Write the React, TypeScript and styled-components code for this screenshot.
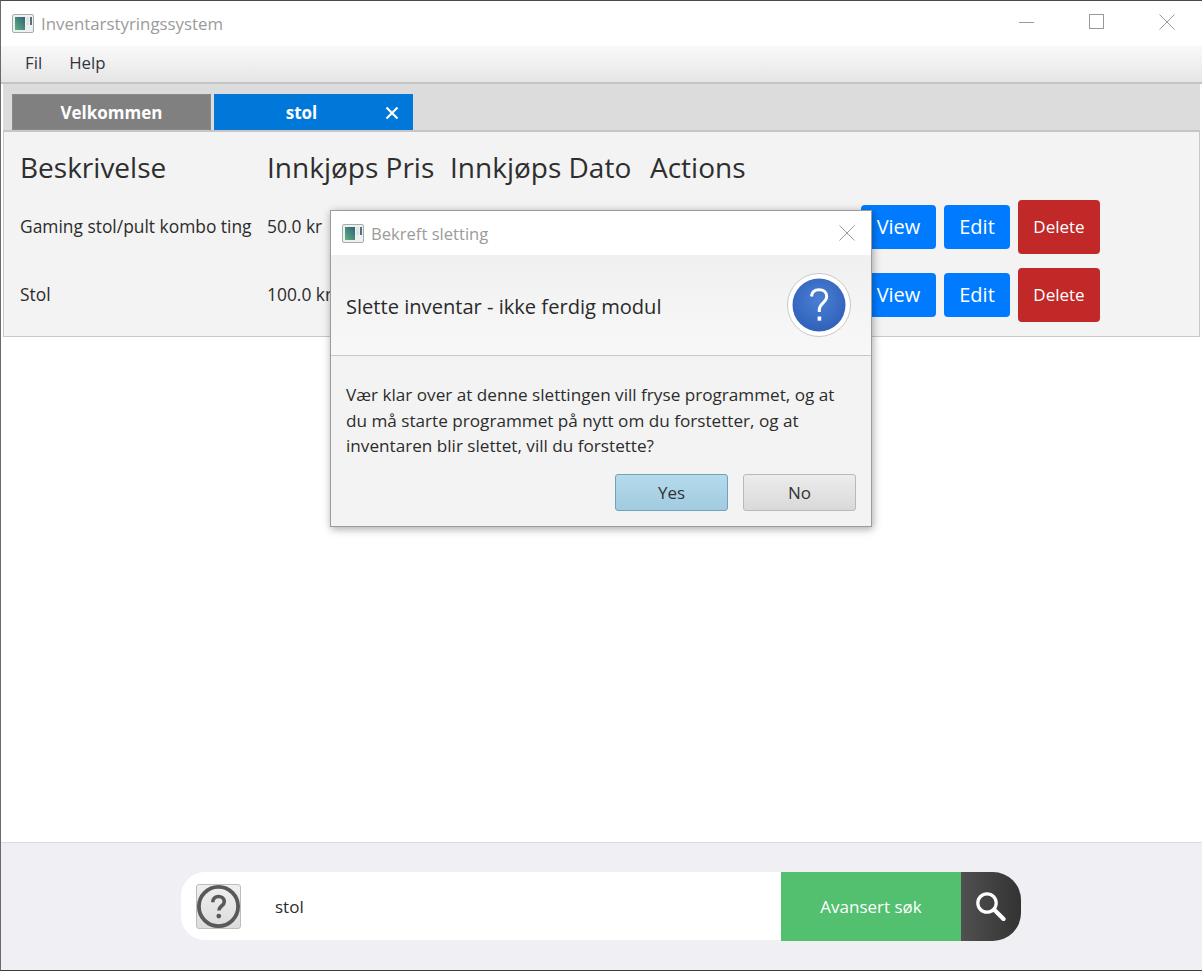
import styled, { createGlobalStyle } from 'styled-components';

const GlobalStyle = createGlobalStyle`
    html, body {
        margin: 0;
        padding: 0;
        background: #ffffff;
    }
    body {
        font-family: "Open Sans", "Noto Sans", "Liberation Sans", sans-serif;
        color: #2c2c2c;
    }
`;

const Window = styled.div`
    position: relative;
    display: flex;
    flex-direction: column;
    width: 1202px;
    height: 971px;
    box-sizing: border-box;
    border-top: 1px solid #4a4a4a;
    border-left: 1px solid #6a6a6a;
    border-bottom: 1px solid #3a3a3a;
    overflow: hidden;
    background: #ffffff;
`;

const TitleBar = styled.div`
    display: flex;
    align-items: center;
    height: 45px;
    padding: 0 0 0 11px;
    flex-shrink: 0;
    background: #ffffff;
`;

const TitleText = styled.span`
    margin-left: 7px;
    font-size: 16.85px;
    color: #9b9b9b;
    white-space: nowrap;
`;

const WindowControls = styled.div`
    display: flex;
    align-items: center;
    margin-left: auto;
    margin-bottom: 3px;
    padding-right: 27px;
    gap: 54px;
`;

const MenuBar = styled.div`
    display: flex;
    align-items: center;
    height: 38px;
    padding: 0 0 4px 24px;
    gap: 27px;
    flex-shrink: 0;
    box-sizing: border-box;
    border-bottom: 2px solid #c4c4c4;
    background: linear-gradient(to bottom, #f9f9f9, #e6e6e6);
`;

const MenuItem = styled.span`
    font-size: 16.8px;
    color: #33333f;
`;

const TabHeader = styled.div`
    display: flex;
    align-items: flex-end;
    height: 48px;
    margin: 0 2px 0 2px;
    padding: 0 0 0 9px;
    gap: 3px;
    flex-shrink: 0;
    box-sizing: border-box;
    border-bottom: 2px solid #c6c6c6;
    background: #dcdcdc;
`;

const Tab = styled.div<{ $active?: boolean }>`
    position: relative;
    display: flex;
    align-items: center;
    justify-content: center;
    width: 199px;
    height: 36px;
    padding-right: ${(p) => (p.$active ? 24 : 0)}px;
    box-sizing: border-box;
    border: 1px solid ${(p) => (p.$active ? '#0a78d8' : '#8a8a8a')};
    background: ${(p) => (p.$active ? '#0078d9' : '#808080')};
    color: #ffffff;
    font-size: 17px;
    font-weight: 700;
`;

const TabClose = styled.svg`
    position: absolute;
    right: 13px;
    top: 11px;
`;

const TablePane = styled.div`
    display: flex;
    flex-direction: column;
    height: 205px;
    margin: 0 2px;
    padding: 15px 0 0 16px;
    flex-shrink: 0;
    box-sizing: border-box;
    border: 1px solid #c8c8c8;
    border-top: none;
    background: #f3f3f3;
`;

const HeaderRow = styled.div`
    display: grid;
    grid-template-columns: 247px 183px 200px auto;
    height: 40px;
    align-items: center;
    font-size: 28px;
    color: #2e2e2e;
    white-space: nowrap;
`;

const DataRow = styled.div`
    display: grid;
    grid-template-columns: 247px 183px 411px auto;
    height: 68px;
    align-items: center;
    font-size: 17.4px;
    color: #2c2c2c;
    white-space: nowrap;
    span {
        margin-bottom: 2px;
    }
`;

const FirstDataRow = styled(DataRow)`
    margin-top: 6px;
`;

const Actions = styled.div`
    display: flex;
    align-items: center;
    gap: 8px;
    grid-column: 4;
`;

const ActionButton = styled.div<{ $width: number; $danger?: boolean }>`
    display: flex;
    align-items: center;
    justify-content: center;
    width: ${(p) => p.$width}px;
    height: ${(p) => (p.$danger ? 54 : 44)}px;
    padding-bottom: 2px;
    box-sizing: border-box;
    border-radius: 4px;
    background: ${(p) => (p.$danger ? '#c12828' : '#007bff')};
    color: #ffffff;
    font-size: ${(p) => (p.$danger ? 17 : 20)}px;
`;

const Spacer = styled.div`
    flex: 1;
    background: #ffffff;
`;

const BottomBar = styled.div`
    display: flex;
    justify-content: center;
    height: 128px;
    padding: 29px 1px 0 0;
    flex-shrink: 0;
    box-sizing: border-box;
    border-top: 1px solid #dcdcdc;
    background: #f0f0f4;
`;

const SearchBox = styled.div`
    display: flex;
    width: 840px;
    height: 69px;
`;

const SearchField = styled.div`
    display: flex;
    align-items: center;
    width: 600px;
    height: 68px;
    padding-left: 15px;
    box-sizing: border-box;
    border-radius: 24px 0 0 24px;
    background: #ffffff;
`;

const HelpButton = styled.div`
    display: flex;
    align-items: center;
    justify-content: center;
    width: 45px;
    height: 45px;
    box-sizing: border-box;
    border: 1px solid #bdbdbd;
    border-radius: 3px;
    background: linear-gradient(to bottom, #efefef, #dcdcdc);
`;

const SearchText = styled.span`
    margin-left: 34px;
    font-size: 17px;
    color: #2c2c2c;
`;

const AdvancedButton = styled.div`
    display: flex;
    align-items: center;
    justify-content: center;
    width: 180px;
    height: 69px;
    background: #52c06e;
    color: #ffffff;
    font-size: 17px;
`;

const SearchButton = styled.div`
    display: flex;
    align-items: center;
    justify-content: center;
    width: 60px;
    height: 69px;
    border-radius: 0 28px 28px 0;
    background: linear-gradient(to right, #505050, #333333);
`;

const Dialog = styled.div`
    position: absolute;
    left: 329px;
    top: 209px;
    display: flex;
    flex-direction: column;
    width: 542px;
    height: 317px;
    box-sizing: border-box;
    border: 1px solid #9c9c9c;
    background: #f3f3f3;
    box-shadow: 1px 2px 8px rgba(0, 0, 0, 0.35);
`;

const DialogTitle = styled.div`
    display: flex;
    align-items: center;
    height: 44px;
    padding: 0 16px 0 11px;
    flex-shrink: 0;
    background: #ffffff;
`;

const DialogTitleText = styled.span`
    margin-left: 7px;
    font-size: 16.6px;
    color: #9b9b9b;
`;

const DialogClose = styled.svg`
    margin-left: auto;
`;

const Masthead = styled.div`
    display: flex;
    align-items: center;
    justify-content: space-between;
    height: 101px;
    padding: 0 20px 0 15px;
    flex-shrink: 0;
    box-sizing: border-box;
    border-bottom: 1px solid #c8c8c8;
    background: linear-gradient(to bottom, #f0f0f0, #f8f8f8);
    font-size: 20.1px;
    color: #2a2a2a;
`;

const MastheadText = styled.span`
    margin-top: 2px;
`;

const QuestionBadge = styled.div`
    display: flex;
    align-items: center;
    justify-content: center;
    width: 64px;
    height: 64px;
    box-sizing: border-box;
    border: 1px solid #c9c9c9;
    border-radius: 50%;
    background: #ffffff;
`;

const DialogBody = styled.div`
    padding: 26px 15px 0;
    font-size: 17.15px;
    line-height: 25.5px;
    color: #2c2c2c;
    white-space: nowrap;
`;

const DialogButtons = styled.div`
    display: flex;
    justify-content: flex-end;
    gap: 15px;
    padding: 15px 15px 0 0;
`;

const DialogButton = styled.div<{ $primary?: boolean }>`
    display: flex;
    align-items: center;
    justify-content: center;
    width: 113px;
    height: 37px;
    box-sizing: border-box;
    border: 1px solid ${(p) => (p.$primary ? '#6fa3bd' : '#b9b9b9')};
    border-radius: 3px;
    background: ${(p) =>
        p.$primary
            ? 'linear-gradient(to bottom, #b4daec, #a2cbe0)'
            : 'linear-gradient(to bottom, #ececec, #d9d9d9)'};
    font-size: 17px;
    color: #333333;
`;

function AppIcon() {
    return (
        <svg width="22" height="19" viewBox="0 0 22 19">
            <defs>
                <linearGradient id="appIconFill" x1="0" y1="1" x2="1" y2="0">
                    <stop offset="0" stopColor="#5fb37e" />
                    <stop offset="1" stopColor="#2f5f7c" />
                </linearGradient>
            </defs>
            <rect x="0.5" y="0.5" width="21" height="18" rx="1.5" fill="#eef0f0" stroke="#a6acb0" />
            <rect x="3" y="3" width="10" height="13" fill="url(#appIconFill)" />
            <rect x="14" y="3" width="3" height="8" fill="#dfe3e3" />
            <rect x="18" y="3" width="2" height="8" fill="#58707c" />
        </svg>
    );
}

function HelpIcon() {
    return (
        <svg width="45" height="45" viewBox="0 0 45 45">
            <circle cx="22.5" cy="22.5" r="20.5" fill="none" stroke="#595959" strokeWidth="4" />
            <path
                d="M16.5 18c0-3.6 2.6-6 6-6s6 2.2 6 5.4c0 4.6-5.6 4.6-5.6 9.2"
                fill="none"
                stroke="#595959"
                strokeWidth="3.8"
            />
            <circle cx="22.8" cy="32.5" r="2.5" fill="#595959" />
        </svg>
    );
}

function QuestionDisc() {
    return (
        <svg width="54" height="54" viewBox="0 0 54 54">
            <defs>
                <radialGradient id="discFill" cx="0.5" cy="0.4" r="0.65">
                    <stop offset="0" stopColor="#4a7fd4" />
                    <stop offset="1" stopColor="#2f5fb8" />
                </radialGradient>
            </defs>
            <circle cx="27" cy="27" r="26.5" fill="url(#discFill)" />
            <path
                d="M19.5 18.5c.4-4.4 3.4-6.8 7.6-6.8s7.6 2.6 7.6 6.7c0 6.2-7.4 6.6-7.4 13.2v2.4"
                fill="none"
                stroke="#ffffff"
                strokeWidth="3"
            />
            <rect x="25.6" y="38.5" width="3.6" height="4.2" fill="#ffffff" />
        </svg>
    );
}

function SearchIcon() {
    return (
        <svg width="30" height="29" viewBox="0 0 30 29">
            <circle cx="11" cy="11" r="9.2" fill="none" stroke="#ffffff" strokeWidth="3.2" />
            <path d="M18.5 18l9 9" stroke="#ffffff" strokeWidth="4.2" strokeLinecap="round" />
        </svg>
    );
}

function App() {
    return (
        <>
            <GlobalStyle />
            <Window>
                <TitleBar>
                    <AppIcon />
                    <TitleText>Inventarstyringssystem</TitleText>
                    <WindowControls>
                        <svg width="16" height="16" viewBox="0 0 16 16">
                            <path d="M0 8.5h15" stroke="#999" />
                        </svg>
                        <svg width="16" height="16" viewBox="0 0 16 16">
                            <rect x="0.5" y="0.5" width="14" height="14" fill="none" stroke="#999" />
                        </svg>
                        <svg width="16" height="16" viewBox="0 0 16 16">
                            <path d="M0.5 0.5l15 15M15.5 0.5l-15 15" stroke="#999" />
                        </svg>
                    </WindowControls>
                </TitleBar>
                <MenuBar>
                    <MenuItem>Fil</MenuItem>
                    <MenuItem>Help</MenuItem>
                </MenuBar>
                <TabHeader>
                    <Tab>Velkommen</Tab>
                    <Tab $active>
                        stol
                        <TabClose width="14" height="14" viewBox="0 0 14 14">
                            <path d="M1.5 1.5l11 11M12.5 1.5l-11 11" stroke="#fff" strokeWidth="2.2" />
                        </TabClose>
                    </Tab>
                </TabHeader>
                <TablePane>
                    <HeaderRow>
                        <span>Beskrivelse</span>
                        <span>Innkjøps Pris</span>
                        <span>Innkjøps Dato</span>
                        <span>Actions</span>
                    </HeaderRow>
                    <FirstDataRow>
                        <span>Gaming stol/pult kombo ting</span>
                        <span>50.0 kr</span>
                        <Actions>
                            <ActionButton $width={75}>View</ActionButton>
                            <ActionButton $width={66}>Edit</ActionButton>
                            <ActionButton $width={82} $danger>Delete</ActionButton>
                        </Actions>
                    </FirstDataRow>
                    <DataRow>
                        <span>Stol</span>
                        <span>100.0 kr</span>
                        <Actions>
                            <ActionButton $width={75}>View</ActionButton>
                            <ActionButton $width={66}>Edit</ActionButton>
                            <ActionButton $width={82} $danger>Delete</ActionButton>
                        </Actions>
                    </DataRow>
                </TablePane>
                <Spacer />
                <BottomBar>
                    <SearchBox>
                        <SearchField>
                            <HelpButton>
                                <HelpIcon />
                            </HelpButton>
                            <SearchText>stol</SearchText>
                        </SearchField>
                        <AdvancedButton>Avansert søk</AdvancedButton>
                        <SearchButton>
                            <SearchIcon />
                        </SearchButton>
                    </SearchBox>
                </BottomBar>
                <Dialog>
                    <DialogTitle>
                        <AppIcon />
                        <DialogTitleText>Bekreft sletting</DialogTitleText>
                        <DialogClose width="16" height="16" viewBox="0 0 16 16">
                            <path d="M0.5 0.5l15 15M15.5 0.5l-15 15" stroke="#999" />
                        </DialogClose>
                    </DialogTitle>
                    <Masthead>
                        <MastheadText>Slette inventar - ikke ferdig modul</MastheadText>
                        <QuestionBadge>
                            <QuestionDisc />
                        </QuestionBadge>
                    </Masthead>
                    <DialogBody>
                        Vær klar over at denne slettingen vill fryse programmet, og at
                        <br />
                        du må starte programmet på nytt om du forstetter, og at
                        <br />
                        inventaren blir slettet, vill du forstette?
                    </DialogBody>
                    <DialogButtons>
                        <DialogButton $primary>Yes</DialogButton>
                        <DialogButton>No</DialogButton>
                    </DialogButtons>
                </Dialog>
            </Window>
        </>
    );
}

export default App
